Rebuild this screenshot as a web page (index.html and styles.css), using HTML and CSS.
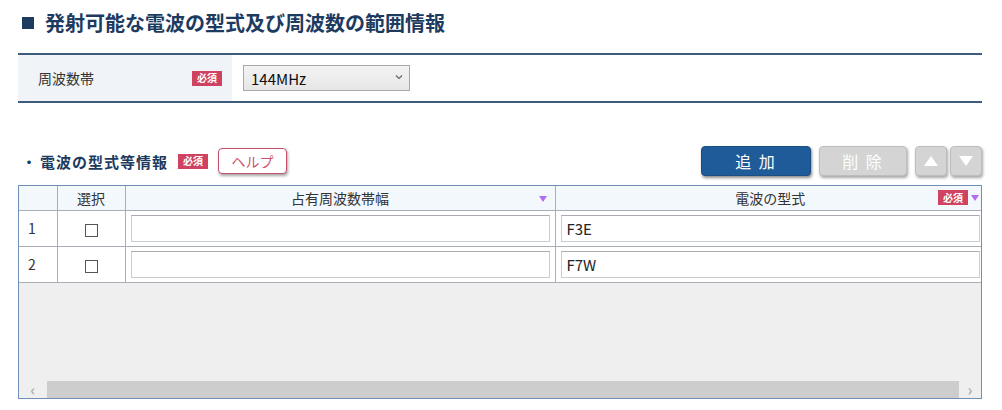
FILE: index.html
```html
<!DOCTYPE html>
<html lang="ja">
<head>
<meta charset="utf-8">
<link rel="stylesheet" href="styles.css">
</head>
<body>
<div class="page">
  <h1 class="title"><span class="sq"></span>発射可能な電波の型式及び周波数の範囲情報</h1>

  <div class="form-row">
    <div class="label-cell"><span class="label">周波数帯</span><span class="badge">必須</span></div>
    <div class="value-cell">
      <div class="select"><span>144MHz</span><svg class="chev" width="8" height="6" viewBox="0 0 8 6"><path d="M1 1.5 L4 4.5 L7 1.5" fill="none" stroke="#666" stroke-width="1.2"/></svg></div>
    </div>
  </div>

  <div class="section-bar">
    <div class="section-left">
      <span class="dot">・</span><span class="sec-title">電波の型式等情報</span><span class="badge">必須</span>
      <button class="help">ヘルプ</button>
    </div>
    <div class="actions">
      <button class="btn primary">追 加</button>
      <button class="btn disabled wide">削 除</button>
      <button class="btn disabled sq-btn"><svg width="14" height="10" viewBox="0 0 14 10"><path d="M7 0 L14 10 L0 10 Z" fill="#fff"/></svg></button>
      <button class="btn disabled sq-btn"><svg width="14" height="10" viewBox="0 0 14 10"><path d="M0 0 L14 0 L7 10 Z" fill="#fff"/></svg></button>
    </div>
  </div>

  <div class="grid-box">
    <div class="grid-area">
      <table class="grid">
        <colgroup><col class="c1"><col class="c2"><col class="c3"><col class="c4"></colgroup>
        <thead>
          <tr>
            <th></th>
            <th>選択</th>
            <th class="with-tri">占有周波数帯幅<span class="tri"></span></th>
            <th class="with-tri">電波の型式<span class="hb"><span class="badge">必須</span><span class="tri tri-inline"></span></span></th>
          </tr>
        </thead>
        <tbody>
          <tr>
            <td class="num">1</td>
            <td class="chk"><span class="box"></span></td>
            <td class="inp"><div class="field"></div></td>
            <td class="inp"><div class="field">F3E</div></td>
          </tr>
          <tr>
            <td class="num">2</td>
            <td class="chk"><span class="box"></span></td>
            <td class="inp"><div class="field"></div></td>
            <td class="inp"><div class="field">F7W</div></td>
          </tr>
        </tbody>
      </table>
    </div>
    <div class="hscroll">
      <span class="arr">&lsaquo;</span>
      <span class="thumb"></span>
      <span class="arr">&rsaquo;</span>
    </div>
  </div>
</div>
</body>
</html>
```

FILE: styles.css
```css
* { box-sizing: border-box; }
html, body { margin: 0; padding: 0; background: #fff; }
body {
  font-family: "Noto Sans CJK JP", "Noto Sans", sans-serif;
  color: #333;
  width: 1002px;
  height: 410px;
  overflow: hidden;
}
.page { padding: 0 20px 0 18px; }

.title {
  margin: 0;
  height: 44px;
  display: flex;
  align-items: center;
  padding-left: 4px;
  font-size: 20px;
  font-weight: 700;
  color: #1d3a5f;
}
.title .sq {
  width: 12px; height: 12px;
  background: #1d3a5f;
  margin-right: 11px;
  margin-top: 1px;
}

.form-row {
  margin-top: 9px;
  display: flex;
  height: 50px;
  border-top: 2px solid #3d5b7b;
  border-bottom: 2px solid #3d5b7b;
}
.label-cell {
  width: 214px;
  background: #f0f4f8;
  display: flex;
  align-items: center;
  justify-content: space-between;
  padding: 0 10px 0 20px;
}
.label { font-size: 14px; color: #333; }
.badge {
  display: inline-flex;
  align-items: center;
  justify-content: center;
  width: 30px;
  height: 15px;
  background: #d04262;
  color: #fff;
  font-size: 10px;
  font-weight: 700;
  line-height: 1;
}
.value-cell {
  flex: 1;
  display: flex;
  align-items: center;
  padding-left: 11px;
}
.select {
  width: 167px;
  height: 26px;
  border: 1px solid #a9a9a9;
  background: linear-gradient(#f3f3f3, #e6e6e6);
  display: flex;
  align-items: center;
  justify-content: space-between;
  padding: 0 6px 0 7px;
  font-size: 15px;
  color: #111;
}
.chev { margin-top: -2px; }

.section-bar {
  margin-top: 42px;
  display: flex;
  justify-content: space-between;
  align-items: center;
  height: 32px;
}
.section-left { display: flex; align-items: center; padding-left: 4px; }
.dot { font-size: 14px; color: #1d3a5f; width: 18px; font-weight: 700; }
.sec-title { font-size: 15px; font-weight: 700; color: #1d3a5f; letter-spacing: 1px; margin-right: 10px; }
.help {
  margin-left: 10px;
  width: 69px;
  height: 26px;
  border: 1.5px solid #c4526d;
  border-radius: 4px;
  background: #fff;
  color: #d0536f;
  font-family: inherit;
  font-size: 14px;
  padding: 0;
  box-shadow: 1px 2px 3px rgba(0,0,0,0.35);
}
.actions { display: flex; align-items: center; gap: 0; }
.btn {
  height: 30px;
  border-radius: 4px;
  font-family: inherit;
  font-size: 16px;
  color: #fff;
  padding: 0;
  display: inline-flex;
  align-items: center;
  justify-content: center;
  letter-spacing: 2px;
}
.primary {
  width: 110px;
  background: #1f5b98;
  border: 1px solid #1a4e85;
  box-shadow: 1px 2px 3px rgba(0,0,0,0.45);
  margin-right: 8px;
}
.disabled {
  background: #d4d4d4;
  border: 1px solid #bdbdbd;
  box-shadow: 1px 2px 3px rgba(0,0,0,0.35);
}
.wide { width: 88px; margin-right: 8px; }
.sq-btn { width: 32px; margin-right: 3px; }
.sq-btn:last-child { margin-right: 0; }

.grid-box {
  margin-top: 8px;
  width: 964px;
  height: 214px;
  border: 1px solid #6e8fb8;
  display: flex;
  flex-direction: column;
  background: #f0efef;
}
.grid-area { flex: 1; overflow: hidden; }
.grid {
  border-collapse: collapse;
  table-layout: fixed;
  width: 966px;
  font-size: 14px;
}
.c1 { width: 38px; }
.c2 { width: 68px; }
.c3 { width: 430px; }
.c4 { width: 430px; }
.grid th {
  height: 24px;
  background: #f3f8fc;
  font-weight: 400;
  color: #333;
  border-left: 1px solid #a8aeb6;
  border-bottom: 1px solid #a8aeb6;
  padding: 0;
  text-align: center;
  position: relative;
}
.grid th:first-child, .grid td:first-child { border-left: none; }
.grid td {
  height: 36px;
  background: #fff;
  border-left: 1px solid #a8aeb6;
  border-bottom: 1px solid #a8aeb6;
  padding: 0;
}
.tri {
  position: absolute;
  right: 8px;
  top: 10px;
  width: 0; height: 0;
  border-left: 4px solid transparent;
  border-right: 4px solid transparent;
  border-top: 6px solid #b26ef2;
}
.hb {
  position: absolute;
  right: 6px;
  top: 4px;
  display: flex;
  align-items: center;
}
.tri-inline { position: static; margin-left: 3px; }
.num { padding-left: 9px !important; font-size: 14px; }
.chk { text-align: center; }
.box {
  display: inline-block;
  width: 13px; height: 13px;
  border: 1px solid #555;
  background: #fff;
  vertical-align: middle;
}
.inp { padding: 0 5px 0 5px !important; }
.field {
  height: 27px;
  border: 1px solid #c9ced4;
  border-top-color: #a9adb3;
  background: #fff;
  font-size: 15px;
  color: #222;
  padding-left: 5px;
  display: flex;
  align-items: center;
}
.hscroll {
  height: 17px;
  display: flex;
  align-items: center;
  background: #f0efef;
}
.arr {
  width: 28px;
  text-align: center;
  color: #a0a0a0;
  font-size: 16px;
  line-height: 17px;
}
.arr:last-child { width: 22px; }
.thumb { flex: 1; height: 17px; background: #cdcdcd; }
```
